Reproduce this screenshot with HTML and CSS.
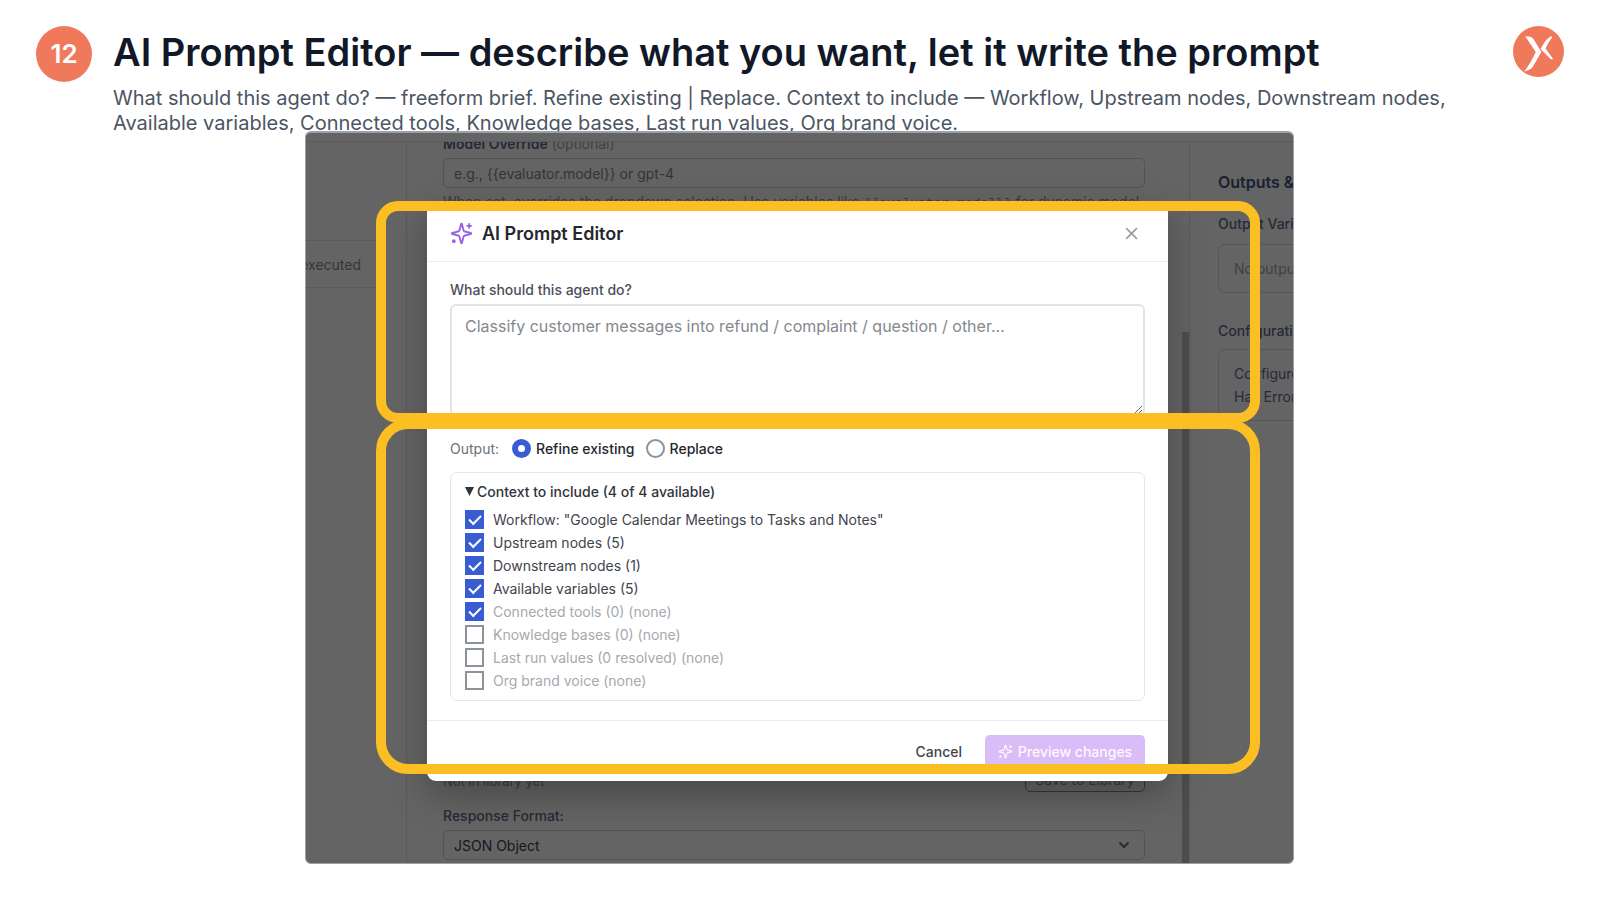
FILE: index.html
```html
<!DOCTYPE html>
<html lang="en">
<head>
<meta charset="utf-8">
<title>AI Prompt Editor</title>
<link rel="stylesheet" href="styles.css">
</head>
<body>
<svg class="sprite" aria-hidden="true">
  <symbol id="sparkles" viewBox="0 0 24 24">
    <path d="M9.9 15.5A2 2 0 0 0 8.500 14.100L2.400 12.500a.5.5 0 0 1 0-1L8.500 9.900A2 2 0 0 0 9.900 8.500L11.500 2.400a.5.5 0 0 1 1 0L14.100 8.500A2 2 0 0 0 15.500 9.900L21.600 11.500a.5.5 0 0 1 0 1L15.500 14.100A2 2 0 0 0 14.100 15.500L12.500 21.600a.5.5 0 0 1-1 0z"/>
    <path d="M20 2v4M22 4h-4"/>
    <circle cx="4" cy="20" r="1"/>
  </symbol>
</svg>
<header class="slide-head">
  <span class="step">12</span>
  <div class="heading">
    <h1>AI Prompt Editor — describe what you want, let it write the prompt</h1>
    <p>What should this agent do? — freeform brief. Refine existing | Replace. Context to include — Workflow, Upstream nodes, Downstream nodes, Available variables, Connected tools, Knowledge bases, Last run values, Org brand voice.</p>
  </div>
  <svg class="logo" viewBox="0 0 50 50" role="img" aria-label="Logo">
    <circle cx="25" cy="25" r="25" fill="#f0795b"/>
    <path d="M12 10L17 10.500Q19 11 20.200 13L27.800 25.500L20 39Q18 43 11 44.500Q17 37 22.300 25.500Z" fill="#fff"/>
    <path d="M37.500 10Q33 12 30 17.500L27 22.500L36.500 32Q38 33 39.500 32.500L32 22Q34.500 16 38.500 11Z" fill="#fff"/>
  </svg>
</header>

<main class="frame">
  <div class="backdrop">
    <div class="canvas"><div class="node">executed</div></div>
    <section class="settings">
      <div class="group">
        <label class="override" for="model"><b>Model Override</b> (optional)</label>
        <input class="field" id="model" type="text" placeholder="e.g., {{evaluator.model}} or gpt-4">
        <p class="help">When set, overrides the dropdown selection. Use variables like <code>{{evaluator.model}}</code> for dynamic model</p>
      </div>
      <div class="group">
        <div class="library"><span>Not in library yet</span><button class="save" type="button">Save to Library</button></div>
        <label class="format-label" for="format">Response Format:</label>
        <div class="select-wrap">
          <select class="field format" id="format"><option>JSON Object</option></select>
          <svg class="chevron" viewBox="0 0 12 8"><path d="M1.500 1.500L6 6l4.500-4.500"/></svg>
        </div>
      </div>
      <div class="scrollbar"></div>
    </section>
    <aside class="outputs">
      <h2>Outputs &amp; Configuration</h2>
      <h3>Output Variables</h3>
      <div class="panel empty">No outputs defined</div>
      <h3>Configuration Status</h3>
      <div class="panel">Configured: No<br>Has Errors: No</div>
    </aside>
  </div>

  <section class="dialog" role="dialog" aria-labelledby="dialog-title">
    <div class="dialog-head">
      <svg class="spark"><use href="#sparkles"/></svg>
      <h2 id="dialog-title">AI Prompt Editor</h2>
      <button class="close" type="button" aria-label="Close"><svg viewBox="0 0 12 12"><path d="M1 1l10 10M11 1L1 11"/></svg></button>
    </div>
    <div class="dialog-body">
      <label class="brief-label" for="brief">What should this agent do?</label>
      <textarea id="brief" placeholder="Classify customer messages into refund / complaint / question / other..."></textarea>
      <div class="output-row">
        <span class="output-label">Output:</span>
        <label><input type="radio" name="output" checked>Refine existing</label>
        <label><input type="radio" name="output">Replace</label>
      </div>
      <details class="context" open>
        <summary><svg viewBox="0 0 9 9"><path d="M0 0h9L4.500 9z"/></svg>Context to include (4 of 4 available)</summary>
        <label><input type="checkbox" checked>Workflow: "Google Calendar Meetings to Tasks and Notes"</label>
        <label><input type="checkbox" checked>Upstream nodes (5)</label>
        <label><input type="checkbox" checked>Downstream nodes (1)</label>
        <label><input type="checkbox" checked>Available variables (5)</label>
        <label class="none"><input type="checkbox" checked>Connected tools (0) (none)</label>
        <label class="none"><input type="checkbox">Knowledge bases (0) (none)</label>
        <label class="none"><input type="checkbox">Last run values (0 resolved) (none)</label>
        <label class="none"><input type="checkbox">Org brand voice (none)</label>
      </details>
    </div>
    <div class="dialog-foot">
      <button class="cancel" type="button">Cancel</button>
      <button class="preview" type="button"><svg><use href="#sparkles"/></svg>Preview changes</button>
    </div>
  </section>
  <div class="highlight highlight-brief"></div>
  <div class="highlight highlight-context"></div>
</main>
</body>
</html>
```
FILE: styles.css
```css
* { box-sizing: border-box; }
body { margin: 0; background: #fff; font-family: Inter, "Liberation Sans", sans-serif; font-size: 14px; color: #30343c; }
h1, h2, h3, p { margin: 0; }
button, input, select, textarea { font: inherit; color: inherit; margin: 0; }
.sprite { display: none; }

.slide-head { display: flex; align-items: flex-start; height: 131px; padding: 26px 36px 0; }
.step { flex: none; width: 56px; height: 56px; margin-right: 21px; border-radius: 50%; background: #f0795b; color: #fff; font-size: 26px; font-weight: 600; line-height: 56px; text-align: center; }
.heading { flex: 1; min-width: 0; }
.heading h1 { color: #111827; font-size: 38px; line-height: 52px; font-weight: 600; white-space: nowrap; }
.heading p { margin: 8px 40px 0 0; color: #4b5563; font-size: 20px; line-height: 25px; }
.logo { flex: none; width: 51px; height: 51px; }

.frame { position: relative; display: grid; margin: 0 306px 0 305px; border: 1px solid #9ca0a8; border-top-width: 2px; border-radius: 6px; background: #646464; }
.backdrop, .dialog { grid-area: 1 / 1; }
.backdrop { display: grid; grid-template-columns: 100px 1fr 103px; min-width: 0; height: 100%; padding-top: 8px; overflow: hidden; border-radius: 5px; color: #252a36; }
.canvas { border-top: 1px solid #5c5c5c; }
.node { width: 68px; height: 48px; margin-top: 98px; padding-right: 13px; border: 1px solid #5a5a5a; border-width: 1px 0; display: flex; align-items: center; justify-content: flex-end; color: #34363a; overflow: hidden; }
.settings { position: relative; display: flex; flex-direction: column; justify-content: space-between; min-width: 0; padding: 0 44px 3px 36px; border: solid #5a5a5a; border-width: 1px 1px 0; overflow: hidden; }
.group { display: flex; flex-direction: column; }
.override { height: 16px; line-height: 4px; color: #414141; }
.override b { font-weight: 600; color: #252a36; }
.field { width: 100%; height: 30px; padding: 0 10px; border: 1px solid #535353; border-radius: 5px; background: transparent; }
.field::placeholder { color: #343434; opacity: 1; }
.help { margin-top: 6px; font-size: 14px; line-height: 16px; color: #393c42; white-space: nowrap; }
.help code { font-family: "Liberation Mono", monospace; font-size: 13px; }
.library { display: flex; justify-content: space-between; align-items: flex-end; height: 30px; color: #393c42; font-size: 13px; line-height: 22px; }
.save { width: 120px; height: 30px; padding: 6px 0 0; border: 1px solid #343840; border-radius: 5px; background: transparent; font-size: 14px; }
.format-label { margin-top: 12px; line-height: 24px; font-weight: 500; }
.select-wrap { position: relative; margin-top: 2px; }
.format { display: block; appearance: none; color: #131722; }
.chevron { position: absolute; right: 15px; top: 11px; width: 12px; height: 8px; fill: none; stroke: #252a36; stroke-width: 2; }
.scrollbar { position: absolute; right: 0; top: 190px; bottom: 0; width: 7px; background: #4d4d4d; }
.outputs { padding: 28px 0 0 28px; border-top: 1px solid #5a5a5a; overflow: hidden; white-space: nowrap; }
.outputs h2 { font-size: 16px; font-weight: 600; line-height: 24px; color: #1a2030; }
.outputs h3 { margin-top: 20px; font-size: 14px; font-weight: 500; line-height: 20px; }
.outputs .panel { width: 240px; margin-top: 10px; padding: 12px 15px; border: 1px solid #565656; border-radius: 7px; line-height: 23px; }
.outputs .empty { color: #414141; }
.outputs .empty + h3 { margin-top: 28px; }
.outputs .panel:last-child { margin-top: 8px; }

.dialog { position: relative; z-index: 1; margin: 69px 125px 82px 121px; border-radius: 9px; background: #fff; box-shadow: 0 14px 36px rgba(0,0,0,.28); }
.dialog-head { display: flex; align-items: center; height: 60px; padding: 4px 30px 0 23px; border-bottom: 1px solid #ebebed; }
.spark { width: 23px; height: 23px; margin-right: 9px; fill: none; stroke: #9a63e4; stroke-width: 2; stroke-linecap: round; }
.dialog-head h2 { font-size: 18px; font-weight: 600; line-height: 28px; color: #24272e; }
.close { display: flex; margin-left: auto; padding: 0; border: 0; background: none; }
.close svg { width: 13px; height: 13px; fill: none; stroke: #979ba3; stroke-width: 1.500; }
.dialog-body { padding: 18px 23px 19px; }
.brief-label { display: block; height: 24px; line-height: 20px; font-weight: 500; color: #4a4f58; }
.dialog textarea { display: block; width: 100%; height: 112px; padding: 10px 13px; border: 2px solid #e0e3e8; border-radius: 6px; background: #fff; font-size: 16px; line-height: 20px; resize: vertical; }
.dialog textarea::placeholder { color: #85888e; opacity: 1; }
.output-row { display: flex; align-items: center; height: 20px; margin: 22px 0 14px; color: #24272e; font-weight: 500; }
.output-row label { display: flex; align-items: center; margin-right: 11px; }
.output-label { width: 62px; color: #6b7079; font-weight: 400; }
.output-row input { appearance: none; width: 19px; height: 19px; margin: 0 5px 0 0; border: 2px solid #8e9299; border-radius: 50%; background: #fff; }
.output-row input:checked { border: 6px solid #3a5cd3; }
.context { padding: 7px 14px 8px; border: 1px solid #e5e6e9; border-radius: 7px; }
.context summary { display: flex; align-items: center; height: 22px; margin-bottom: 6px; font-weight: 500; list-style: none; color: #30343c; }
.context summary svg { width: 9px; height: 9px; margin-right: 3px; fill: #30343c; }
.context label { display: flex; align-items: center; height: 23px; color: #3f444d; }
.context .none { color: #a6a9ae; }
.context input { appearance: none; width: 19px; height: 19px; margin: 0 9px 0 0; border: 2px solid #8e9299; background: #fff; }
.context input:checked { border: 0; background: #3a5cd3; display: grid; place-items: center; }
.context input:checked::after { content: ""; width: 10px; height: 5px; margin-bottom: 3px; border: solid #fff; border-width: 0 0 2px 2px; transform: rotate(-45deg); }
.dialog-foot { display: flex; justify-content: flex-end; gap: 23px; height: 61px; padding: 14px 23px 14px; border-top: 1px solid #ebebed; }
.dialog-foot button { display: flex; align-items: center; justify-content: center; padding: 0; border: 0; font-weight: 500; }
.cancel { background: none; color: #3f444d; }
.preview { width: 160px; gap: 5px; border-radius: 5px; background: #d8bdf6; color: #fff8ff; }
.preview svg { width: 15px; height: 15px; fill: none; stroke: #fff8ff; stroke-width: 2; }

.highlight { position: absolute; z-index: 2; left: 70px; right: 33px; border: 10px solid #fbbf24; pointer-events: none; }
.highlight-brief { top: 68px; height: 222px; border-radius: 22px; }
.highlight-context { top: 286px; height: 355px; border-radius: 32px; }
```
